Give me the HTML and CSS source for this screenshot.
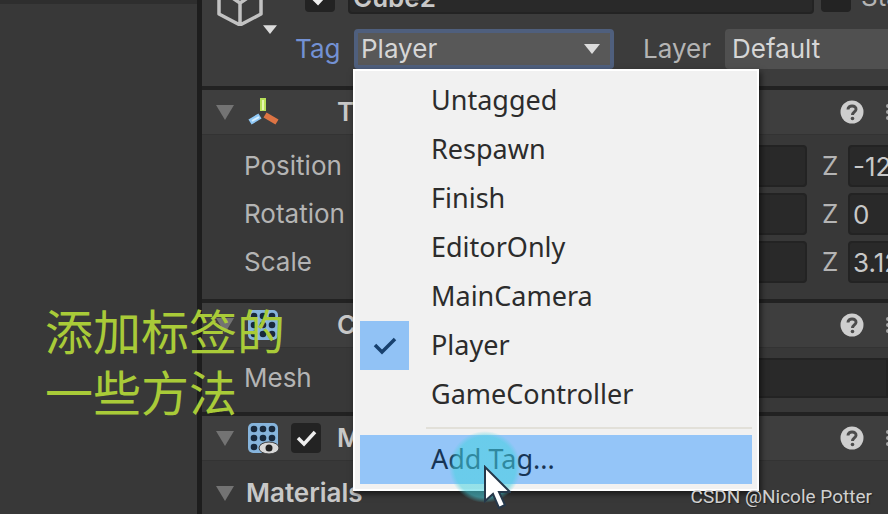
FILE: index.html
```html
<!DOCTYPE html>
<html lang="zh-CN">
<head>
<meta charset="utf-8">
<title>Inspector</title>
<link rel="stylesheet" href="styles.css">
</head>
<body>
<svg class="defs" aria-hidden="true">
  <symbol id="fold" viewBox="0 0 20 16"><path d="M1 1h18l-9 15z" fill="#737373"/></symbol>
  <symbol id="caret" viewBox="0 0 16 10"><path d="M0 0h16L8 10z" fill="#dcdcdc"/></symbol>
  <symbol id="help" viewBox="0 0 24 24"><circle cx="12" cy="12" r="11.5" fill="#cecece"/><path d="M8 9.5C8 4.500 16.500 5 16 9.500c-.2 2.500-3.500 2.500-3.500 5.500" fill="none" stroke="#4c4c4c" stroke-width="3"/><circle cx="12.500" cy="18.500" r="1.800" fill="#4c4c4c"/></symbol>
  <symbol id="dots" viewBox="0 0 4 20"><g fill="#a4a4a4"><circle cx="2" cy="4" r="2"/><circle cx="2" cy="10" r="2"/><circle cx="2" cy="16" r="2"/></g></symbol>
  <symbol id="mesh" viewBox="0 0 32 32"><rect x="1" y="1" width="30" height="30" rx="5" fill="#86b4dc"/><g fill="#18293c"><circle cx="7" cy="7" r="3.300"/><circle cx="16" cy="7" r="3.300"/><circle cx="25" cy="7" r="3.300"/><circle cx="7" cy="16" r="3.300"/><circle cx="16" cy="16" r="3.300"/><circle cx="25" cy="16" r="3.300"/><circle cx="7" cy="25" r="3.300"/><circle cx="16" cy="25" r="3.300"/><circle cx="25" cy="25" r="3.300"/></g></symbol>
</svg>
<main class="editor">
  <section class="scene" aria-label="Scene"></section>
  <section class="inspector" aria-label="Inspector">
    <header class="object">
      <div class="object-icon">
        <svg class="cube" viewBox="0 0 46 50"><path d="M2 13v25l21 11 21-11V13L23 2zM2 13l21 14 21-14M23 27v21" fill="none" stroke="#c2c2c2" stroke-width="3.500" stroke-linejoin="round"/></svg>
        <svg class="cube-caret"><use href="#caret"/></svg>
      </div>
      <div class="object-fields">
        <div class="name-row">
          <input class="check" type="checkbox" checked aria-label="Active">
          <input class="field name" value="Cube2" aria-label="Name">
          <input class="check" type="checkbox" id="static">
          <label for="static">Static</label>
        </div>
        <div class="tag-row">
          <label class="tag-label" for="tag">Tag</label>
          <div class="picker">
            <select class="select active" id="tag"><option>Player</option></select>
            <svg class="select-caret"><use href="#caret"/></svg>
            <div class="menu" role="listbox" aria-label="Tag">
              <button class="item" role="option">Untagged</button>
              <button class="item" role="option">Respawn</button>
              <button class="item" role="option">Finish</button>
              <button class="item" role="option">EditorOnly</button>
              <button class="item" role="option">MainCamera</button>
              <button class="item" role="option" aria-selected="true"><span class="tick"><svg viewBox="0 0 24 18"><path d="M2 8l7 7L22 2" fill="none" stroke="#17406e" stroke-width="3.500"/></svg></span>Player</button>
              <button class="item" role="option">GameController</button>
              <hr class="rule">
              <button class="item hot" role="option">Add Tag...</button>
              <span class="halo"></span>
              <svg class="cursor" viewBox="0 0 28 44"><path d="M2 2v34l8-7 6 14 6-3-6-13h11z" fill="#fff" stroke="#26384a" stroke-width="2"/></svg>
            </div>
          </div>
          <label class="layer-label" for="layer">Layer</label>
          <select class="select layer" id="layer"><option>Default</option></select>
        </div>
      </div>
    </header>

    <article class="component">
      <header class="bar">
        <svg class="fold"><use href="#fold"/></svg>
        <svg class="icon" viewBox="0 0 32 32"><g fill="none" stroke-width="6"><path d="M16 2v13" stroke="#b8e05a"/><path d="M13 20L3 26" stroke="#8fc8f6"/><path d="M18 19l12 7" stroke="#dd7444"/></g><path d="M16 4v10" stroke="#e6f5b0" stroke-width="2"/><path d="M12 21l-7 4" stroke="#d8efff" stroke-width="2"/></svg>
        <span class="slot"></span>
        <h2>Transform</h2>
        <svg class="help"><use href="#help"/></svg>
        <svg class="dots"><use href="#dots"/></svg>
      </header>
      <div class="body">
        <div class="vector"><span>Position</span>
          <input class="field" aria-label="Position X"><input class="field" aria-label="Position Y"><label>Z<input class="field" value="-12.4"></label></div>
        <div class="vector"><span>Rotation</span>
          <input class="field" aria-label="Rotation X"><input class="field" aria-label="Rotation Y"><label>Z<input class="field" value="0"></label></div>
        <div class="vector"><span>Scale</span>
          <input class="field" aria-label="Scale X"><input class="field" aria-label="Scale Y"><label>Z<input class="field" value="3.12"></label></div>
      </div>
    </article>

    <article class="component">
      <header class="bar">
        <svg class="fold"><use href="#fold"/></svg>
        <svg class="icon"><use href="#mesh"/></svg>
        <span class="slot"></span>
        <h2>Cube (Mesh Filter)</h2>
        <svg class="help"><use href="#help"/></svg>
        <svg class="dots"><use href="#dots"/></svg>
      </header>
      <div class="body single">
        <label for="mesh-field">Mesh</label>
        <input class="field" id="mesh-field">
      </div>
    </article>

    <article class="component">
      <header class="bar">
        <svg class="fold"><use href="#fold"/></svg>
        <svg class="icon" viewBox="0 0 32 32"><use href="#mesh"/><ellipse cx="22" cy="26" rx="10" ry="6" fill="#d8d8d8" stroke="#3c3c3c"/><circle cx="22" cy="26" r="3.500" fill="#222"/></svg>
        <span class="slot"><input class="check" type="checkbox" checked aria-label="Mesh Renderer enabled"></span>
        <h2>Mesh Renderer</h2>
        <svg class="help"><use href="#help"/></svg>
        <svg class="dots"><use href="#dots"/></svg>
      </header>
      <div class="materials">
        <svg class="fold"><use href="#fold"/></svg>
        <h3>Materials</h3>
      </div>
    </article>
  </section>
</main>
<p class="note">添加标签的<br>一些方法</p>
<p class="credit">CSDN @Nicole Potter</p>
</body>
</html>
```
FILE: styles.css
```css
* { box-sizing: border-box; }
body {
  margin: 0;
  height: 100vh;
  overflow: hidden;
  position: relative;
  background: #383838;
  color: #b4b4b4;
  font: 26px/32px Inter, "Liberation Sans", sans-serif;
}
h2, h3, p { margin: 0; }
h2, h3 { font-size: 26px; font-weight: 600; color: #c8c8c8; white-space: nowrap; }
input, select, button { font: inherit; color: inherit; margin: 0; }
svg { display: block; flex: none; }
.defs { position: absolute; width: 0; height: 0; }

.editor { display: grid; grid-template-columns: 197px minmax(0, 1fr); min-height: 100vh; }
.scene { border-top: 4px solid #2e2e2e; }
.inspector { border-left: 5px solid #1d1d1d; overflow: hidden; }

.field {
  width: 100%;
  height: 42px;
  min-width: 0;
  padding: 0 3px;
  border: 2px solid #232323;
  border-radius: 4px;
  background: #292929;
  color: #c8c8c8;
}
.check {
  appearance: none;
  flex: none;
  width: 30px;
  height: 30px;
  border-radius: 4px;
  background: #232323;
}
.check:checked {
  background: #232323 url("data:image/svg+xml,%3Csvg xmlns='http://www.w3.org/2000/svg' viewBox='0 0 30 30'%3E%3Cpath d='M7 15l6 6L24 9' fill='none' stroke='%23eee' stroke-width='3.500'/%3E%3C/svg%3E");
}

.object { display: flex; height: 86px; background: #3c3c3c; }
.object-icon { flex: none; display: flex; width: 90px; padding-left: 15px; margin-top: -24px; }
.cube { width: 46px; height: 50px; }
.cube-caret { width: 14px; height: 9px; margin-top: 49px; }
.object-fields { flex: 1; min-width: 0; }
.name-row { display: flex; align-items: center; height: 34px; margin: -20px 0 15px 13px; white-space: nowrap; }
.name-row label { margin-left: 10px; }
.name { flex: none; width: 466px; height: 34px; margin: 0 7px 0 13px; font-weight: 600; }
.tag-row { display: flex; align-items: center; }
.tag-label { flex: none; width: 62px; padding-left: 3px; color: #7391d3; }
.picker { position: relative; flex: none; width: 260px; }
.select {
  appearance: none;
  display: block;
  width: 100%;
  height: 40px;
  padding: 0 5px;
  border: 2px solid #505050;
  border-radius: 4px;
  background: #505050;
  color: #d6d6d6;
}
.active { border: 4px solid #4f5f7d; background: #585858; padding: 0 3px; }
.select-caret { position: absolute; right: 14px; top: 15px; width: 16px; height: 10px; }
.layer-label { margin: 0 14px 0 29px; }
.layer { flex: none; width: 260px; }

.menu {
  position: absolute;
  z-index: 2;
  left: -1px;
  top: 40px;
  width: 406px;
  padding: 5px;
  border: 2px solid #fff;
  background: #f1f1f1;
  box-shadow: 2px 3px 6px #0009;
  font: 27px/45px "Noto Sans", "Open Sans", sans-serif;
}
.item {
  position: relative;
  display: block;
  width: 100%;
  height: 49px;
  padding: 0 0 2px 71px;
  border: 0;
  background: none;
  color: #2c2c2c;
  text-align: left;
}
.tick {
  position: absolute;
  left: 0;
  top: 0;
  display: grid;
  place-items: center;
  width: 49px;
  height: 49px;
  background: #91c2f5;
}
.tick svg { width: 24px; height: 18px; }
.rule { height: 2px; margin: 8px 0 6px 66px; border: 0; background: #e2e0d9; }
.hot { background: #94c5f8; color: #173455; }
.halo {
  position: absolute;
  left: 94px;
  top: 360px;
  width: 72px;
  height: 72px;
  border-radius: 50%;
  background: radial-gradient(closest-side, #45d2e088 85%, #45d2e000);
}
.cursor { position: absolute; left: 128px; top: 394px; width: 28px; height: 44px; }

.component { border-top: 4px solid #222; }
.bar { display: flex; align-items: center; height: 45px; padding-left: 13px; background: #3e3e3e; border-bottom: 1px solid #333; }
.fold { width: 20px; height: 16px; }
.icon { width: 32px; height: 32px; margin-left: 12px; }
.slot { display: flex; flex: none; width: 58px; padding-left: 12px; }
.help { width: 24px; height: 24px; margin-left: auto; }
.dots { width: 4px; height: 20px; margin: 0 -2px 0 22px; }
.body { display: grid; gap: 6px; padding: 10px 0 16px 42px; }
.vector { display: grid; grid-template-columns: 151px repeat(3, 191px); column-gap: 15px; align-items: center; }
.vector label { display: grid; grid-template-columns: 26px 1fr; align-items: center; }
.body.single { grid-template-columns: 166px 1fr; gap: 0; align-items: center; padding: 10px 0 14px 42px; }
.single .field { height: 40px; border-radius: 0; }
.materials { display: flex; align-items: center; gap: 11px; padding: 16px 0 0 13px; }

.note {
  position: absolute;
  z-index: 3;
  left: 45px;
  top: 299px;
  color: #a9cb38;
  font: 48px/61px "Noto Sans CJK SC", sans-serif;
}
.credit {
  position: absolute;
  z-index: 3;
  right: 16px;
  bottom: 5px;
  color: #d0d0d0;
  font: 19px/24px Roboto, sans-serif;
  text-shadow: 1px 1px 1px #222;
}
```
